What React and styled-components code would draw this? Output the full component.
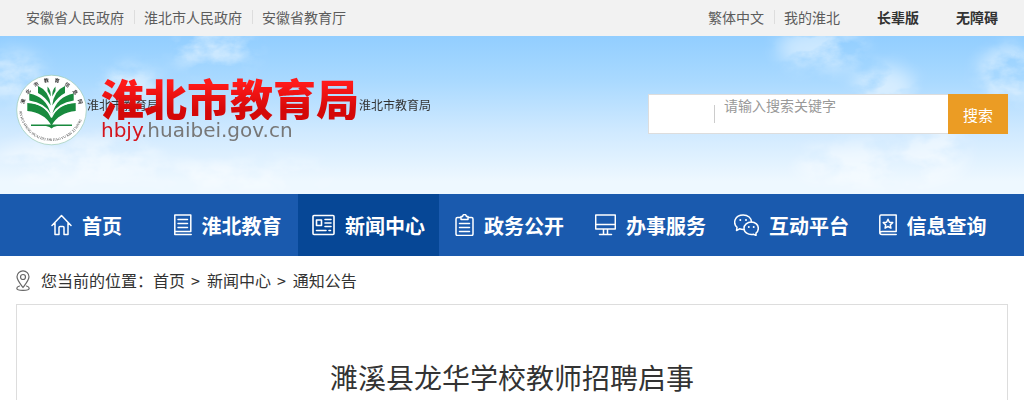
import styled, { createGlobalStyle } from "styled-components";

const GlobalStyle = createGlobalStyle`
  * {
    box-sizing: border-box;
  }

  body {
    margin: 0;
    background: #fff;
    color: #333;
    font-family: "Noto Sans CJK SC", "Liberation Sans", sans-serif;
    font-size: 14px;
  }

  a {
    color: inherit;
    text-decoration: none;
  }
`;

const TopBar = styled.div`
  display: flex;
  justify-content: space-between;
  height: 36px;
  padding: 0 16px 2px;
  background: #f2f2f2;
  color: #5c5c5c;
  line-height: 34px;
`;

const TopLinks = styled.nav`
  display: flex;
  align-items: center;
`;

const TopLink = styled.a`
  padding: 0 10px;
  line-height: 14px;

  & + & {
    border-left: 1px solid #ddd;
    padding-left: 9px;
  }
`;

const ToolLink = styled.a`
  margin-left: 27px;
  padding-right: 10px;
  color: #333;
  font-weight: 700;
`;

const Header = styled.header`
  position: relative;
  display: flex;
  justify-content: space-between;
  align-items: flex-start;
  padding: 38px 16px 48px;
  background: linear-gradient(#92ceff, #a9d9ff 28%, #cfe9ff 60%, #eef8ff 92%);
`;

const Sky = styled.svg`
  position: absolute;
  inset: 0;
  width: 100%;
  height: 100%;
`;

const Brand = styled.a`
  position: relative;
  display: flex;
  gap: 200px;
  height: 72px;
  color: #333;
  font-size: 12px;
  line-height: 62px;
  white-space: nowrap;
`;

const EmblemGroup = styled.span`
  display: flex;
`;

const Emblem = styled.svg`
  flex: none;
  width: 71px;
  height: 72px;
`;

const Wordmark = styled.span`
  position: absolute;
  left: 85px;
  top: 0;
`;

const SiteName = styled.strong`
  display: block;
  background: linear-gradient(#ff1a1a 20%, #d40808 80%);
  background-clip: text;
  color: transparent;
  font-size: 43px;
  font-weight: 900;
  line-height: 46px;
`;

const SiteUrl = styled.span`
  display: block;
  color: #777;
  font-family: "DejaVu Sans", sans-serif;
  font-size: 20px;
  line-height: 20px;

  em {
    color: #d4141c;
    font-style: normal;
  }
`;

const Search = styled.form`
  position: relative;
  display: flex;
  width: 360px;
  height: 40px;
  margin-top: 20px;
`;

const SearchField = styled.div`
  display: flex;
  flex: 1;
  align-items: flex-start;
  padding-left: 65px;
  border: 1px solid #ddd;
  border-right: 0;
  background: #fff;
`;

const Divider = styled.span`
  align-self: center;
  width: 1px;
  height: 18px;
  background: #ccc;
`;

const SearchInput = styled.input`
  flex: 1;
  min-width: 0;
  height: 20px;
  padding: 0 9px;
  border: 0;
  outline: none;
  background: transparent;
  color: #333;
  font: inherit;
  line-height: 20px;

  &::placeholder {
    color: #999;
  }
`;

const SearchButton = styled.button`
  width: 60px;
  padding: 0;
  border: 0;
  background: #eb9c24;
  color: #fff;
  font: inherit;
  font-size: 15px;
  cursor: pointer;
`;

const MainNav = styled.nav`
  display: flex;
  padding: 0 21px 0 16px;
  background: #1a5aae;
`;

const NavLink = styled.a`
  display: flex;
  flex: 1;
  justify-content: center;
  align-items: center;
  gap: 10px;
  height: 62px;
  background: ${(props) => (props.$active ? "#064796" : "transparent")};
  color: #fff;
  font-size: 20px;
  font-weight: 700;
  white-space: nowrap;
`;

const Icon = styled.svg`
  flex: none;
  fill: none;
  stroke: currentColor;
  stroke-linecap: round;
  stroke-linejoin: round;
`;

const Breadcrumb = styled.nav`
  display: flex;
  align-items: center;
  height: 48px;
  padding: 0 16px;
  font-size: 16px;
  line-height: 46px;

  svg {
    margin-right: 11px;
    color: #666;
  }
`;

const Arrow = styled.span`
  margin: 0 7px 0 6px;
`;

const Article = styled.main`
  min-height: 96px;
  margin: 0 16px;
  padding: 51px 20px 0;
  border: 1px solid #ddd;
  border-bottom: 0;
`;

const Title = styled.h1`
  margin: 0;
  font-size: 28px;
  font-weight: 400;
  line-height: 42px;
  text-align: center;
`;

const navItems = [
  {
    label: "首页",
    width: 21,
    icon: <path d="M1 11.5 10.5 1.5 20 11.5M4 9.5V20.5H8V13.5Q8 12.5 9 12.5H12Q13 12.5 13 13.5V20.5H17V9.5" />,
  },
  {
    label: "淮北教育",
    width: 18,
    icon: <path d="M.8 1H16.8V17.5H.8ZM4 5.5H13.5M4 9.5H13.5M4 13.5H13.5M.8 17.5V20.5H17.2" />,
  },
  {
    label: "新闻中心",
    width: 23,
    active: true,
    icon: (
      <g strokeWidth="1.6">
        <rect x="1" y="1.5" width="21" height="19" rx="1" />
        <path d="M4.5 6H9.5V11.5H4.5ZM13 5.5H19M13 9H19M13 12.5H19M4.5 16.5H14M17 16.5H18.5" />
      </g>
    ),
  },
  {
    label: "政务公开",
    width: 19,
    icon: (
      <path d="M6 3.5H2.5Q1 3.5 1 5V20Q1 21.5 2.5 21.5H16.5Q18 21.5 18 20V5Q18 3.5 16.5 3.5H13M6 2.5H7.5Q8 .5 9.5 .5T11.5 2.5H13V5.5H6ZM4.5 9.5H14.5M4.5 13.5H14.5M4.5 17.5H14.5" />
    ),
  },
  {
    label: "办事服务",
    width: 21,
    icon: <path d="M.7 1H20.3V15H.7ZM.7 10.5H20.3M8.5 15V20.5M12.5 15V20.5M4.5 20.5H16.5" />,
  },
  {
    label: "互动平台",
    width: 25,
    icon: (
      <>
        <path d="M9.5 15.5C7.5 15.5 6.5 15.2 5.5 14.8L2.5 16.5 3 13.3C-1.5 9 .8 1 9.2 1 14 1 17.5 4 17.5 8" />
        <path d="M17.3 8C21.5 8 24.3 10.8 24.3 14.2 24.3 16.3 23.5 18 22 19.2V21.5L19.7 20.3C14 21.5 10 18.3 10 14.2 10 10.8 13.3 8 17.3 8Z" />
        <path strokeWidth="2" d="M6.3 6V6.1M12 6V6.1M14.8 13V13.1M19.7 13V13.1" />
      </>
    ),
  },
  {
    label: "信息查询",
    width: 18,
    icon: (
      <path d="M17.2 17.5V1H2Q.8 1 .8 2.5V18.5Q.8 20.5 3 20.5H17.2M.8 18.5Q1 17.5 3 17.5H17.2M9 5.2 10.4 8.2 13.7 8.6 11.3 10.9 11.9 14.1 9 12.5 6.1 14.1 6.7 10.9 4.3 8.6 7.6 8.2Z" />
    ),
  },
];

function SkyClouds() {
  return (
    <Sky viewBox="0 0 1024 158" preserveAspectRatio="none" aria-hidden="true">
      <defs>
        <filter id="cloud" x="-40%" y="-40%" width="180%" height="180%">
          <feGaussianBlur in="SourceAlpha" stdDeviation="9" result="shape" />
          <feTurbulence type="fractalNoise" baseFrequency=".025 .04" numOctaves="5" seed="8" />
          <feColorMatrix values="0 0 0 0 1  0 0 0 0 1  0 0 0 0 1  3 0 0 0 -.9" />
          <feComposite in2="shape" operator="in" />
        </filter>
      </defs>
      <g fill="#fff" filter="url(#cloud)">
        <g opacity=".5">
          <ellipse cx="215" cy="12" rx="45" ry="22" />
          <ellipse cx="822" cy="12" rx="45" ry="22" />
          <ellipse cx="130" cy="48" rx="30" ry="18" />
          <ellipse cx="884" cy="50" rx="30" ry="20" />
          <ellipse cx="12" cy="40" rx="32" ry="24" />
          <ellipse cx="1010" cy="38" rx="32" ry="28" />
        </g>
        <g opacity=".5">
          <ellipse cx="80" cy="124" rx="85" ry="22" />
          <ellipse cx="880" cy="128" rx="85" ry="22" />
          <ellipse cx="940" cy="107" rx="28" ry="18" />
          <ellipse cx="240" cy="138" rx="90" ry="14" />
        </g>
      </g>
    </Sky>
  );
}

function SchoolEmblem() {
  return (
    <Emblem viewBox="0 0 71 72" aria-hidden="true">
      <defs>
        <path id="lower" d="M3.5 35A32 32 0 0 0 67.5 35" />
      </defs>
      <circle cx="35.5" cy="36" r="34.8" fill="#fff" stroke="#9ccbb5" strokeWidth=".7" />
      <g fill="#333" fontFamily="Noto Sans CJK SC, sans-serif">
        {["淮", "北", "市", "教", "育", "信", "息", "网"].map((char, i) => (
          <text
            key={char}
            x="35.5"
            y="8"
            fontSize="5"
            fontWeight="700"
            textAnchor="middle"
            transform={`rotate(${-73 + i * 21} 35.5 36)`}
          >
            {char}
          </text>
        ))}
        <text fontSize="3.6" fontFamily="Liberation Serif, serif">
          <textPath href="#lower" startOffset="2">
            AN HUI SHENG HUAI BEI SHI JIAO YU XIN XI WANG
          </textPath>
        </text>
      </g>
      <g fill="#188a3e">
        <path d="M35.5 51.5Q28 38.5 11.3 37V29Q29 30 35.5 43Q42 30 59.7 29V37Q43 38.5 35.5 51.5Z" />
        <path d="M34.6 39.5Q29 29 13.3 26.5V19.5Q30 22.5 34.6 39.5ZM36.4 39.5Q42 29 57.7 26.5V19.5Q41 22.5 36.4 39.5Z" />
        <path d="M34.8 31.5Q29 22.5 22 19V12Q33 16.5 34.8 31.5ZM36.2 31.5Q42 22.5 49 19V12Q38 16.5 36.2 31.5Z" />
        <path d="M34.8 22.5 31.5 17V12.5Q35 16 34.8 22.5ZM36.2 22.5 39.5 17V12.5Q36 16 36.2 22.5Z" />
        <path d="M15 50.5H56V52H41Q37 52.5 35.5 54.5 34 52.5 30 52H15Z" />
      </g>
      <g stroke="#fff" strokeWidth="1.2" fill="none">
        <path d="M35.5 43.5Q29 29.5 12 28M35.5 43.5Q42 29.5 59 28" />
      </g>
    </Emblem>
  );
}

function App() {
  return (
    <>
      <GlobalStyle />
      <TopBar>
        <TopLinks>
          <TopLink href="#">安徽省人民政府</TopLink>
          <TopLink href="#">淮北市人民政府</TopLink>
          <TopLink href="#">安徽省教育厅</TopLink>
        </TopLinks>
        <TopLinks>
          <TopLink href="#">繁体中文</TopLink>
          <TopLink href="#">我的淮北</TopLink>
          <ToolLink href="#">长辈版</ToolLink>
          <ToolLink href="#">无障碍</ToolLink>
        </TopLinks>
      </TopBar>

      <Header>
        <SkyClouds />
        <Brand href="#">
          <EmblemGroup>
            <SchoolEmblem />
            <span>淮北市教育局</span>
          </EmblemGroup>
          <span>淮北市教育局</span>
          <Wordmark>
            <SiteName>淮北市教育局</SiteName>
            <SiteUrl>
              <em>hbjy</em>.huaibei.gov.cn
            </SiteUrl>
          </Wordmark>
        </Brand>
        <Search>
          <SearchField>
            <Divider />
            <SearchInput type="text" aria-label="搜索" placeholder="请输入搜索关键字" />
          </SearchField>
          <SearchButton type="button">搜索</SearchButton>
        </Search>
      </Header>

      <MainNav>
        {navItems.map(({ label, width, icon, active }) => (
          <NavLink key={label} href="#" $active={active}>
            <Icon width={width} height="22" viewBox={`0 0 ${width} 22`} strokeWidth="1.5">
              {icon}
            </Icon>
            {label}
          </NavLink>
        ))}
      </MainNav>

      <Breadcrumb>
        <Icon width="14" height="21" viewBox="0 0 14 21" strokeWidth="1.2">
          <path d="M7 17.5C4 13.5 1 10 1 6.8A6 6 0 0 1 13 6.8C13 10 10 13.5 7 17.5ZM3.5 16Q.8 17 .8 18.2C.8 21 13.2 21 13.2 18.2Q13.2 17 10.5 16" />
          <circle cx="7" cy="7" r="2.5" />
        </Icon>
        <span>您当前的位置：</span>
        <a href="#">首页</a>
        <Arrow>&gt;</Arrow>
        <a href="#">新闻中心</a>
        <Arrow>&gt;</Arrow>
        <a href="#">通知公告</a>
      </Breadcrumb>

      <Article>
        <Title>濉溪县龙华学校教师招聘启事</Title>
      </Article>
    </>
  );
}

export default App;
